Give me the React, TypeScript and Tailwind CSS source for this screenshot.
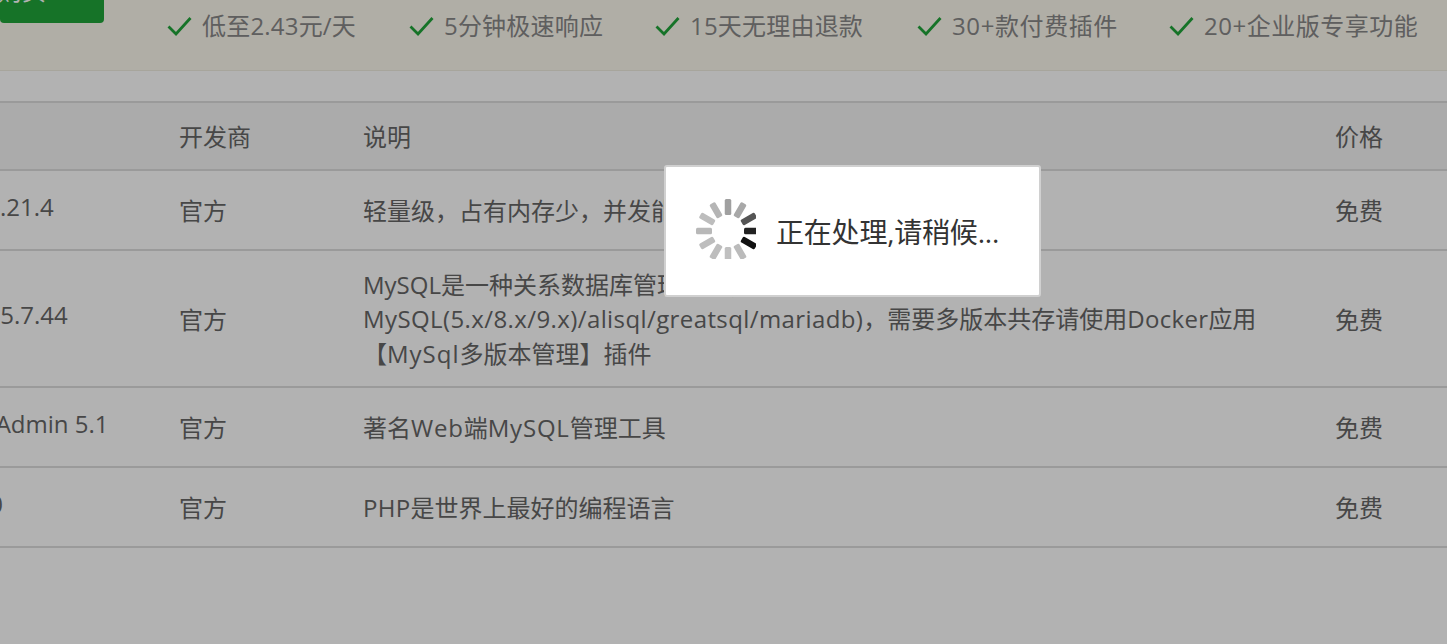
const perks = [
  { text: "低至2.43元/天", width: "w-[242px]", spacing: "tracking-[0.2px]" },
  { text: "5分钟极速响应", width: "w-[246px]", spacing: "tracking-[0.2px]" },
  { text: "15天无理由退款", width: "w-[262px]", spacing: "tracking-[0.2px]" },
  { text: "30+款付费插件", width: "w-[252px]", spacing: "tracking-[0.6px]" },
  { text: "20+企业版专享功能", width: "w-[278px]", spacing: "tracking-[0.5px]" },
]

const rows = [
  { name: "nginx 1.21.4", offset: "ml-[-81px]", height: "h-[80px]", desc: "轻量级，占有内存少，并发能力强" },
  {
    name: "MySQL 5.7.44",
    offset: "ml-[-84px]",
    height: "h-[137px]",
    desc: (
      <>
        MySQL是一种关系数据库管理系统，此处提供的版本安装
        <br />
        <span className="tracking-[0.4px]">MySQL(5.x/8.x/9.x)/alisql/greatsql/mariadb)</span>
        ，需要多版本共存请使用<span className="tracking-[0.3px]">Docker</span>应用
        <br />
        【<span className="tracking-[1px]">MySql</span>多版本管理】插件
      </>
    ),
  },
  {
    name: "phpMyAdmin 5.1",
    offset: "ml-[-82px]",
    height: "h-[80px]",
    desc: (
      <>
        著名<span className="tracking-[0.8px]">Web</span>端<span className="tracking-[0.8px]">MySQL</span>管理工具
      </>
    ),
  },
  {
    name: "PHP-7.0",
    offset: "ml-[-85px]",
    height: "h-[80px]",
    desc: (
      <>
        <span className="tracking-[0.3px]">PHP</span>是世界上最好的编程语言
      </>
    ),
  },
]

const Spinner = () => {
  const bars = [
    { angle: 90, color: "#222222" },
    { angle: 120, color: "#111111" },
    { angle: 150, color: "#bbbbbb" },
    { angle: 180, color: "#c0c0c0" },
    { angle: 210, color: "#bdbdbd" },
    { angle: 240, color: "#bdbdbd" },
    { angle: 270, color: "#b8b8b8" },
    { angle: 300, color: "#bdbdbd" },
    { angle: 330, color: "#b5b5b5" },
    { angle: 0, color: "#a0a0a0" },
    { angle: 30, color: "#a8a8a8" },
    { angle: 60, color: "#555555" },
  ]
  return (
    <svg width="60" height="60" viewBox="0 0 60 60" className="mb-[4px] shrink-0 blur-[0.5px]">
      {bars.map((b) => (
        <rect
          key={b.angle}
          x="28.75"
          y="0"
          width="6.5"
          height="16"
          rx="1.5"
          fill={b.color}
          transform={`rotate(${b.angle} 32 32)`}
        />
      ))}
    </svg>
  )
}

const App = () => {
  return (
    <div className="relative h-screen overflow-hidden bg-white font-['Open_Sans','Noto_Sans_CJK_SC',sans-serif] text-[24px] text-[#666]">
      {/* top banner */}
      <div className="flex h-[71px] border-b border-[#f0ece0] bg-[#fdf9ee]">
        <div className="flex h-[23px] w-[104px] items-end justify-end overflow-hidden rounded-b-[4px] bg-[#20a53a] pr-[58px]">
          <span className="mb-[20px] shrink-0 leading-[24px] text-white">立即购买</span>
        </div>
        <ul className="ml-[63px] flex pt-[7px] text-[#888]">
          {perks.map((p) => (
            <li key={p.text} className={`flex h-[38px] items-center ${p.width}`}>
              <svg width="25" height="20" viewBox="0 0 25 20" fill="none" className="mr-[10px] shrink-0">
                <path d="M1.5 10.5 L9 18 L23.5 2" stroke="#20a53a" strokeWidth="2.8" />
              </svg>
              <span className={p.spacing}>{p.text}</span>
            </li>
          ))}
        </ul>
      </div>

      {/* plugin table */}
      <div className="mt-[30px] border-t-2 border-[#ddd]">
        <div className="flex h-[68px] items-center border-b-2 border-[#ddd] bg-[#f5f5f5] pt-[2px]">
          <div className="w-[179px]" />
          <div className="w-[184px]">开发商</div>
          <div className="w-[972px]">说明</div>
          <div>价格</div>
        </div>
        {rows.map((r) => (
          <div key={r.name} className={`flex items-center border-b-2 border-[#ddd] pt-[2px] ${r.height}`}>
            <div className="w-[179px]">
              <div className={`mb-[9px] whitespace-nowrap ${r.offset}`}>{r.name}</div>
            </div>
            <div className="w-[184px]">官方</div>
            <div className="w-[972px] leading-[34.5px]">{r.desc}</div>
            <div>免费</div>
          </div>
        ))}
      </div>

      {/* processing overlay */}
      <div className="absolute inset-0 bg-black/30" />
      <div className="absolute left-[664px] top-[165px] flex h-[132px] w-[377px] items-center rounded-[3px] border-2 border-[#d0d0d0] bg-white pl-[30px] text-[#333]">
        <Spinner />
        <span className="ml-[20px] mt-[2px] text-[28px] tracking-[-0.2px]">正在处理,请稍候...</span>
      </div>
    </div>
  )
}

export default App
